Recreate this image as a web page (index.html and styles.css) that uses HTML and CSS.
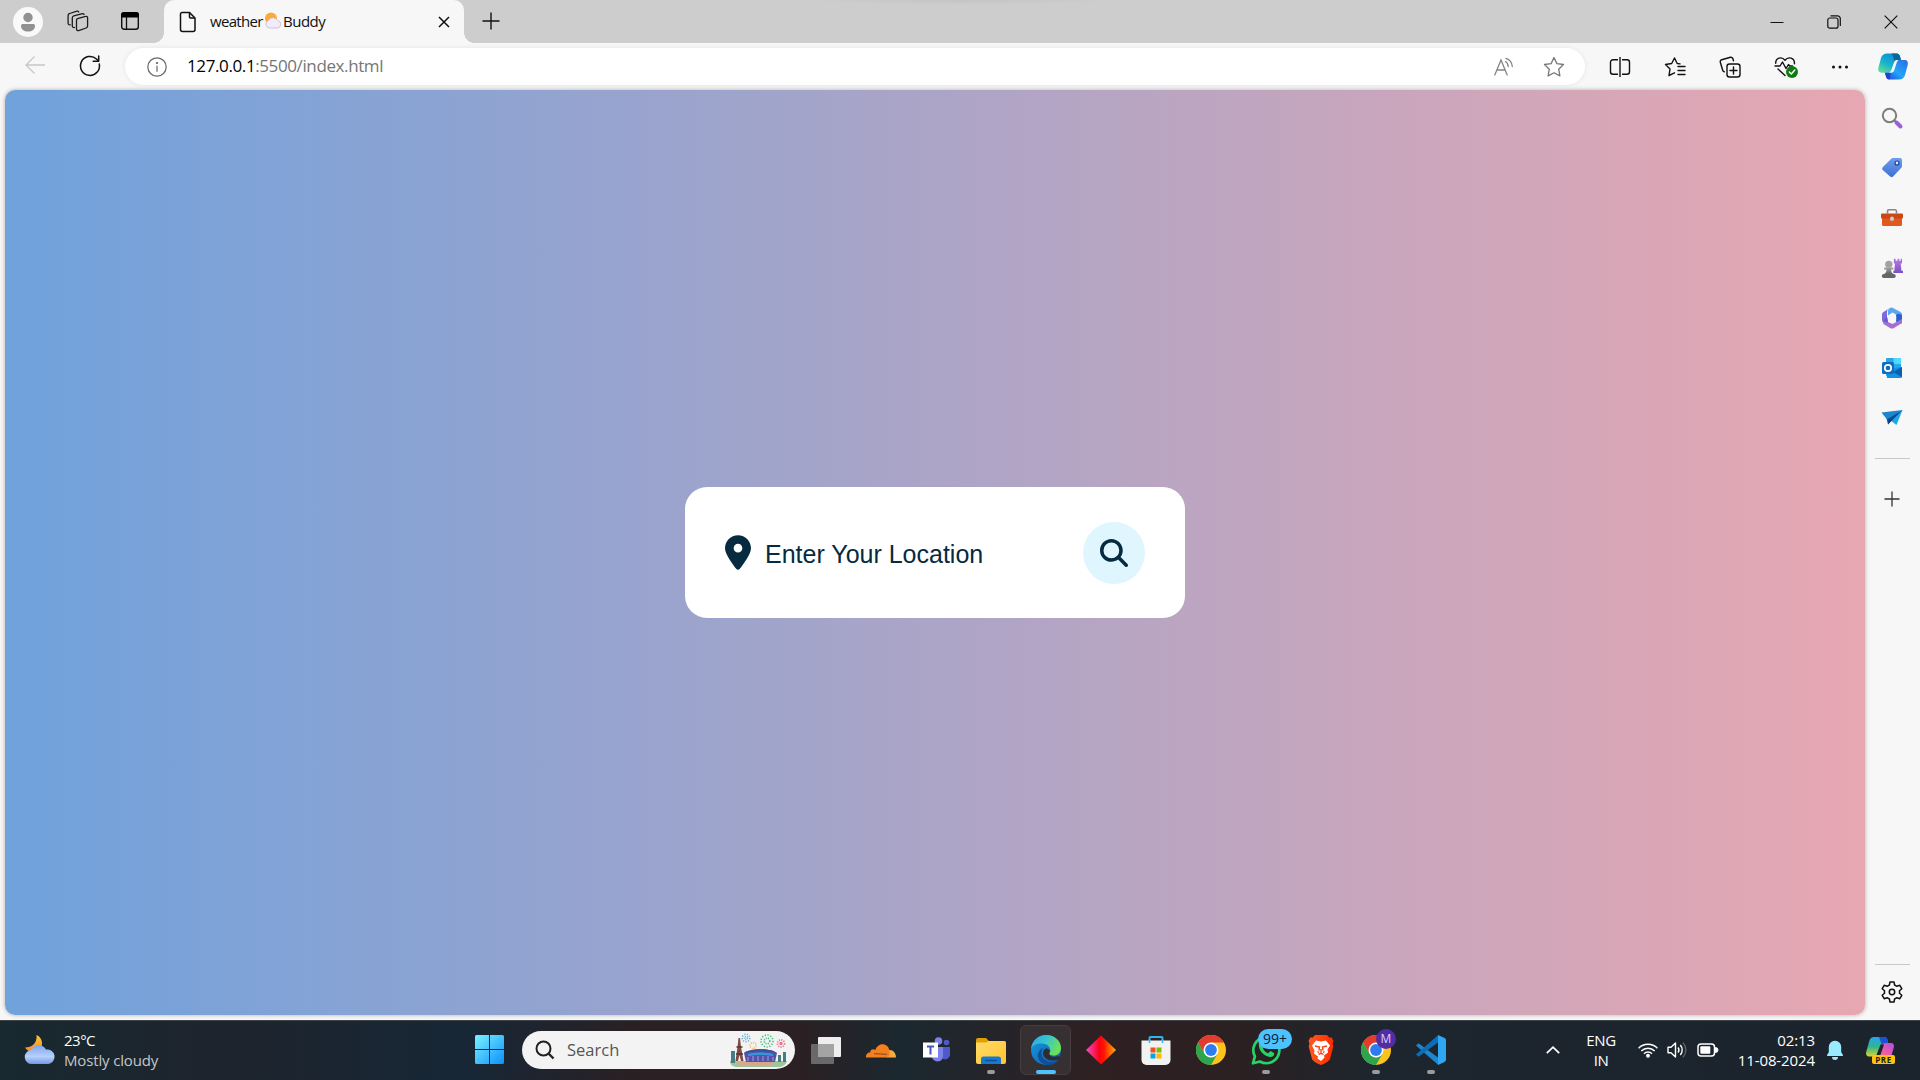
FILE: index.html
```html
<!DOCTYPE html>
<html lang="en">
<head>
<meta charset="utf-8">
<title>weather Buddy</title>
<link rel="stylesheet" href="styles.css">
</head>
<body>
<svg width="0" height="0" class="defs" aria-hidden="true">
  <defs>
    <linearGradient id="gCopA" x1="0" y1="1" x2=".6" y2="0"><stop offset="0" stop-color="#6be58c"/><stop offset=".5" stop-color="#1ab4cb"/><stop offset="1" stop-color="#0b8fd8"/></linearGradient>
    <linearGradient id="gCopB" x1="1" y1="0" x2="0" y2="1"><stop offset="0" stop-color="#2d6be0"/><stop offset=".55" stop-color="#22a6fa"/><stop offset="1" stop-color="#1b3fd0"/></linearGradient>
    <linearGradient id="gPurple" x1="0" y1="0" x2="0" y2="1"><stop offset="0" stop-color="#b779e6"/><stop offset="1" stop-color="#7b4fc4"/></linearGradient>
    <linearGradient id="gGrey" x1="0" y1="0" x2="0" y2="1"><stop offset="0" stop-color="#a3a3a3"/><stop offset="1" stop-color="#636363"/></linearGradient>
    <linearGradient id="gTag" x1="0" y1="0" x2="0" y2="1"><stop offset="0" stop-color="#6f9df0"/><stop offset="1" stop-color="#3d70d2"/></linearGradient>
    <linearGradient id="gWin" x1="0" y1="0" x2="1" y2="1"><stop offset="0" stop-color="#7cf1ff"/><stop offset="1" stop-color="#0b91fb"/></linearGradient>
    <linearGradient id="gCloud" x1="0" y1="0" x2="0" y2="1"><stop offset="0" stop-color="#7ea5ee"/><stop offset=".6" stop-color="#b7d0fb"/><stop offset="1" stop-color="#7398e6"/></linearGradient>
    <linearGradient id="gMoon" x1="0" y1="0" x2="0" y2="1"><stop offset="0" stop-color="#f9c640"/><stop offset="1" stop-color="#f08a24"/></linearGradient>
    <linearGradient id="gFolder" x1="0" y1="0" x2="1" y2="1"><stop offset="0" stop-color="#ffdb69"/><stop offset="1" stop-color="#ffc52e"/></linearGradient>
    <linearGradient id="gDiamond" x1="0" y1="0" x2="1" y2="0"><stop offset="0" stop-color="#f04bd0"/><stop offset=".45" stop-color="#ff0010"/><stop offset=".6" stop-color="#ff1500"/><stop offset="1" stop-color="#ffb800"/></linearGradient>
    <linearGradient id="gEdgeTop" x1="0" y1="0" x2="1" y2=".4"><stop offset="0" stop-color="#2aa6e4"/><stop offset=".5" stop-color="#35c3d4"/><stop offset="1" stop-color="#6be05a"/></linearGradient>
    <linearGradient id="gEdgeLow" x1="0" y1="0" x2="1" y2="1"><stop offset="0" stop-color="#1a9be3"/><stop offset="1" stop-color="#0c59a4"/></linearGradient>
    <linearGradient id="gBrave" x1="0" y1="0" x2="1" y2="0"><stop offset="0" stop-color="#ff5a1f"/><stop offset="1" stop-color="#ff2a00"/></linearGradient>
    <linearGradient id="gPreA" x1="0" y1="0" x2="0" y2="1"><stop offset="0" stop-color="#22a5f2"/><stop offset=".5" stop-color="#31b48d"/><stop offset="1" stop-color="#d9d52c"/></linearGradient>
    <linearGradient id="gPreB" x1="1" y1="0" x2="0" y2="1"><stop offset="0" stop-color="#a952e8"/><stop offset=".6" stop-color="#ec5ba8"/><stop offset="1" stop-color="#ff7f57"/></linearGradient>
    <symbol id="chrome" viewBox="0 0 30 30">
      <circle cx="15" cy="15" r="15" fill="#fcc31e"/>
      <path d="M2 7.500A15 15 0 0 1 28 7.500H15L8.500 18.750Z" fill="#e33b2e"/>
      <path d="M2 7.500A15 15 0 0 0 15 30L21.500 18.750 15 22.500 8.500 18.750Z" fill="#2da44e"/>
      <circle cx="15" cy="15" r="7.500" fill="#fff"/><circle cx="15" cy="15" r="5.900" fill="#2f7cf0"/>
    </symbol>
  </defs>
</svg>

<header class="tabstrip">
  <div class="profile"><svg width="30" height="30" viewBox="0 0 30 30"><circle cx="15" cy="15" r="15" fill="#f9f9f9"/><circle cx="15" cy="10.500" r="4.700" fill="#919191"/><path d="M8 18.500a1.500 1.500 0 0 1 1.500-1.500h11a1.500 1.500 0 0 1 1.500 1.500c0 4-3 6-7 6s-7-2-7-6Z" fill="#919191"/></svg></div>
  <svg class="strip-icon spaces" width="22" height="22" viewBox="0 0 22 22" fill="none" stroke="#1c1c1c" stroke-width="1.300" stroke-linejoin="round" stroke-linecap="round"><path d="M9.500 10.200a1.500 1.500 0 0 1 1.100-1.500l8-2.300a1.500 1.500 0 0 1 2 1.400v8.300a2 2 0 0 1-1.400 1.900l-7.600 2.600a1.600 1.600 0 0 1-2.100-1.500Z"/><path d="M7.500 17.500a1.700 1.700 0 0 1-2.200-1.600V7.800a2 2 0 0 1 1.500-1.900L15.500 3.600a1.500 1.500 0 0 1 1.500 .8"/><path d="M3.300 14.800a1.700 1.700 0 0 1-2.200-1.600V5.400a2 2 0 0 1 1.500-1.900L10 1.200a1.500 1.500 0 0 1 1.700 .8"/></svg>
  <svg class="strip-icon" width="20" height="20" viewBox="0 0 20 20"><rect x="1.700" y="1.700" width="16.600" height="16.600" rx="2.500" fill="none" stroke="#111" stroke-width="1.400"/><path d="M1 6.500V4a3 3 0 0 1 3-3h12a3 3 0 0 1 3 3v2.500Z" fill="#000"/><path d="M6.500 6v12" stroke="#111" stroke-width="1.300"/></svg>
  <div class="tab">
    <svg width="18" height="22" viewBox="0 0 18 22" fill="none" stroke="#111" stroke-width="1.500" stroke-linejoin="round"><path d="M3 1.500h7.500L16 7v11.500a2 2 0 0 1-2 2H3.500a2 2 0 0 1-2-2V3A1.500 1.500 0 0 1 3 1.500Z"/><path d="M10.500 1.500V6A1 1 0 0 0 11.500 7H16"/></svg>
    <div class="tab-title"><span class="t-weather">weather</span><svg width="18" height="17" viewBox="0 0 18 17"><circle cx="7" cy="6.500" r="6" fill="#fbaa35"/><path d="M5.500 16a4 4 0 0 1-.8-7.800A5 5 0 0 1 13.500 8.500a3.800 3.800 0 0 1 0 7.500Z" fill="#f1ecf7" stroke="#c3b6d6" stroke-width=".8"/></svg><span class="t-buddy">Buddy</span></div>
    <svg class="tab-close" width="12" height="12" viewBox="0 0 12 12" stroke="#111" stroke-width="1.500"><path d="M1 1l10 10M11 1L1 11"/></svg>
  </div>
  <svg class="newtab" width="18" height="18" viewBox="0 0 18 18" stroke="#111" stroke-width="1.400"><path d="M9 .5v17M.5 9h17"/></svg>
  <div class="drag-hint"></div>
  <div class="win-buttons">
    <svg width="14" height="14" viewBox="0 0 14 14"><path d="M.5 7.500h13" stroke="#111"/></svg>
    <svg width="14" height="14" viewBox="0 0 14 14" fill="none" stroke="#111" stroke-width="1.200"><rect x=".8" y="3" width="10.200" height="10.200" rx="2"/><path d="M3.500.8h7a2.800 2.800 0 0 1 2.800 2.800V11"/></svg>
    <svg width="14" height="14" viewBox="0 0 14 14" stroke="#111" stroke-width="1.200"><path d="M.7.7l12.600 12.600M13.300.7L.7 13.300"/></svg>
  </div>
</header>

<nav class="toolbar">
  <svg class="back" width="20" height="20" viewBox="0 0 20 20" fill="none" stroke="#c8c8c8" stroke-width="1.300"><path d="M20 10H1.200M9.500 1.500L1 10l8.500 8.500"/></svg>
  <svg class="reload" width="22" height="22" viewBox="0 0 22 22" fill="none" stroke="#111" stroke-width="1.500" stroke-linecap="round" stroke-linejoin="round"><path d="M20.300 9A9.500 9.500 0 1 1 17.500 4l1.700 1.700"/><path d="M19.700 1v5.200h-5.500"/></svg>
  <div class="address">
    <svg width="20" height="20" viewBox="0 0 20 20" fill="none" stroke="#666" stroke-width="1.200"><circle cx="10" cy="10" r="9.200"/><path d="M10 8.700v6"/><circle cx="10" cy="6" r=".5" fill="#666"/></svg>
    <div class="url"><span class="host">127.0.0.1</span><span class="path">:5500/index.html</span></div>
    <svg class="read" width="20" height="20" viewBox="0 0 20 20" fill="none" stroke="#858585" stroke-width="1.300" stroke-linecap="round"><path d="M.8 18L7 3l6.200 15M3 13h8M11.500 4.500c1.800 1 2.600 2.500 2.700 5M12 1.300c3.800 1.300 6 4 6.300 8.200"/></svg>
    <svg width="22" height="22" viewBox="0 0 22 22" fill="none" stroke="#777" stroke-width="1.300" stroke-linejoin="round"><path d="M11 1.500l2.900 6.100 6.600.9-4.800 4.700 1.200 6.700L11 16.700l-5.900 3.200 1.200-6.700L1.500 8.500l6.600-.9Z"/></svg>
  </div>
  <div class="actions">
    <svg width="22" height="22" viewBox="0 0 22 22" fill="none" stroke="#111" stroke-width="1.400"><path d="M9 3.700H4A2.500 2.500 0 0 0 1.500 6.200v9.600A2.500 2.500 0 0 0 4 18.300h5M13 3.700h5a2.500 2.500 0 0 1 2.500 2.500v9.600a2.500 2.500 0 0 1-2.500 2.500h-5M11 1v20"/></svg>
    <svg width="22" height="22" viewBox="0 0 22 22" fill="none" stroke="#111" stroke-width="1.400" stroke-linejoin="round" stroke-linecap="round"><path d="M16 7.900L13.200 7.500 10.500 2 7.700 7.500 1.500 8.500 6 13 5 19.500l5.500-2.700M14 10.500H21M14 14.500H21M14 18.500H21"/></svg>
    <svg width="22" height="22" viewBox="0 0 22 22" fill="none" stroke="#111" stroke-width="1.400" stroke-linecap="round"><rect x="8" y="8" width="13" height="13" rx="2.500"/><path d="M14.500 11v7M11 14.500h7M5.200 15.800a2 2 0 0 1-1.500-1.600L1.300 6.200A2 2 0 0 1 2.700 3.700l8.800-2.400a2 2 0 0 1 2.400 1.500l.6 2"/></svg>
    <svg width="24" height="24" viewBox="0 0 24 24" fill="none" stroke="#111" stroke-width="1.400" stroke-linejoin="round" stroke-linecap="round"><path d="M1.700 8.300C1.500 2.600 7.800 1.200 11 5.200c3.300-4 9.700-2.600 9.500 3.500M4 14l7 6.500M1 11h5l2.500-4 3.500 6.500 2.500-4 1 1.500h3"/><circle cx="18" cy="17" r="6" fill="#107c10" stroke="none"/><path d="M15.300 17l2 2 3.500-4" stroke="#fff"/></svg>
    <svg width="18" height="18" viewBox="0 0 18 18" fill="#111"><circle cx="2.500" cy="9" r="1.500"/><circle cx="9" cy="9" r="1.500"/><circle cx="15.500" cy="9" r="1.500"/></svg>
  </div>
  <svg class="copilot" width="30" height="27" viewBox="0 0 30 27"><path d="M9 .5h9.500c2 0 3 1.200 3.500 3l1 3.500h-3.500c-1.800 0-2.800 1-3.400 3l-2.200 6.500c-.8 2.200-2 3.200-4.200 3.200H3.500C.8 19.700-.3 17.500.5 14.500L3 5C3.800 2 6 .5 9 .5Z" fill="url(#gCopA)"/><path d="M13.500.5h5c2 0 3 1.200 3.500 3l1 3.500h-3.500c-1.800 0-2.800 1-3.400 3-.1-4-.6-7-2.600-9.500Z" fill="#0a6796"/><path d="M20.500 26.500h-9c-2 0-3-1.200-3.500-3l-1-3.800h2.700c2.200 0 3.400-1 4.200-3.200L16.100 10c.6-2 1.600-3 3.400-3h7c2.700 0 3.900 2 3.200 5L27 22c-.8 3-3 4.500-6.500 4.500Z" fill="url(#gCopB)"/><path d="M11.500 26.500c-2 0-3-1.200-3.500-3l-1-3.800h2.700c1.800 0 2.900-.7 3.700-2.200Z" fill="#1c46d2"/><path d="M16.400 8.500c.6-1 1.500-1.500 3-1.500h1.200c-1 .6-1.500 1.500-2 3l-2.200 6.800c-.6 1.900-1.400 2.900-3.200 2.900h-3c1.700-.3 2.600-1.300 3.300-3.200Z" fill="#f7f7f7"/></svg>
</nav>

<div class="content">
  <main class="page">
    <div class="card">
      <svg class="pin" width="26" height="35" viewBox="0 0 384 512"><path fill="#062a3f" d="M215.700 499.200C267 435 384 279.400 384 192C384 86 298 0 192 0S0 86 0 192c0 87.400 117 243 168.300 307.200c12.300 15.300 35.100 15.300 47.400 0zM192 128a64 64 0 1 1 0 128 64 64 0 1 1 0-128z"/></svg>
      <div class="placeholder">Enter Your Location</div>
      <div class="search-btn"><svg width="28" height="28" viewBox="0 0 512 512"><path fill="#062a3f" d="M416 208c0 45.900-14.900 88.300-40 122.700L502.600 457.400c12.500 12.500 12.500 32.800 0 45.300s-32.800 12.500-45.300 0L330.700 376c-34.400 25.200-76.800 40-122.700 40C93.100 416 0 322.900 0 208S93.100 0 208 0S416 93.100 416 208zM208 352a144 144 0 1 0 0-288 144 144 0 1 0 0 288z"/></svg></div>
    </div>
  </main>
  <aside class="sidebar">
    <svg width="22" height="22" viewBox="0 0 22 22"><path d="M13.500 13.500l2.500 2.500" stroke="#777" stroke-width="2"/><circle cx="8.500" cy="8.500" r="6.700" fill="#f7f7f7" stroke="#7d7d7d" stroke-width="2"/><path d="M15.500 15.500l4 4" stroke="#9863d6" stroke-width="4" stroke-linecap="round"/></svg>
    <svg width="22" height="22" viewBox="0 0 22 22"><path d="M12 1h7a2 2 0 0 1 2 2v6a3 3 0 0 1-.9 2.100l-8 8.500a2 2 0 0 1-2.900 0L1.700 13a2 2 0 0 1 0-2.800L10 1.900A3 3 0 0 1 12 1Z" fill="url(#gTag)"/><circle cx="16" cy="6" r="2" fill="#dfe9ff" stroke="#1d3f86" stroke-width="1.200"/></svg>
    <svg width="22" height="22" viewBox="0 0 22 22"><path d="M6.500 6.500V4.300a1.500 1.500 0 0 1 1.500-1.500h6a1.500 1.500 0 0 1 1.500 1.500v2.200" fill="none" stroke="#888" stroke-width="1.600"/><path d="M1 10h20v7.500a1.500 1.500 0 0 1-1.500 1.500h-17A1.500 1.500 0 0 1 1 17.500Z" fill="#e0591f"/><rect x="0" y="6.500" width="22" height="5" rx="1" fill="#cb4713"/><rect x="9" y="9.500" width="4" height="4.500" rx="2" fill="#c9c9c9"/></svg>
    <svg width="24" height="24" viewBox="0 0 24 24"><path d="M14 2h2v2h2V2h2v2h1.500V2H23v5h-1.500l.8 8H24v2.500H13.500V15h1l.8-8H14Z" fill="url(#gPurple)"/><circle cx="8.500" cy="8" r="4" fill="#a2a2a2"/><path d="M3.500 11.500h10v2h-2.500c0 3 1 4 3 5.200h-11c2-1.200 3-2.200 3-5.200H3.500Z" fill="url(#gGrey)"/><rect x="1" y="18.500" width="15" height="4.500" rx="2" fill="#666"/></svg>
    <svg width="22" height="22" viewBox="0 0 22 22"><path d="M8.500 1.200C6.500 2.400 6 3.500 6 5.500v7L2.500 15.300A3 3 0 0 1 1 12.700V7.500A3 3 0 0 1 2.500 5Z" fill="#7c6bdc"/><path d="M8.500 1.200a3.500 3.500 0 0 1 4 0L19.500 5A3 3 0 0 1 21 7.500V11l-6-3.500-3.500-2L7 8.500V5c0-2 .3-2.800 1.500-3.800Z" fill="#58a9f0"/><path d="M21 8v6.500c0 1.300-.5 2-1.500 2.600L15 14.500V8l2-1.500Z" fill="#2f5fd0"/><path d="M2.500 17L1.500 14l5.500-3v4l4.500 2L21 12v2.500a3 3 0 0 1-1.500 2.600L13 21a4 4 0 0 1-4 0Z" fill="#a66fd2"/><path d="M6 9.500L2 14.500 7 15.500Z" fill="#5960cc"/><path d="M11 6.500l4.200 2.400v4.400L11 15.700l-4.200-2.400V8.900Z" fill="#f7f7f7"/></svg>
    <svg width="22" height="22" viewBox="0 0 22 22"><rect x="5" y="1" width="15" height="18" rx="1" fill="#28a8ea"/><path d="M12.500 1H20v6h-7.500Z" fill="#50d9ff"/><path d="M5 7h7.500v6H5Z" fill="#0364b8"/><path d="M21 10v9.500a1.500 1.500 0 0 1-1.500 1.500H6L5 12Z" fill="#1490df"/><path d="M21 10v10L12 15Z" fill="#0a5fae"/><rect x="1" y="5" width="12" height="12" rx="1.500" fill="#0f6cc4"/><circle cx="7" cy="11" r="3.200" fill="none" stroke="#fff" stroke-width="1.700"/></svg>
    <svg width="22" height="22" viewBox="0 0 22 22"><path d="M21.500 3L15.500 18 9 13Z" fill="#1fa5e8"/><path d="M21.500 3L7 17.500 5.500 11Z" fill="#0a4a90"/><path d="M21.500 3L.5 5.500 6 12.500Z" fill="#1c86cf"/><path d="M7 17.500l3-4-1-1Z" fill="#0b2f66"/></svg>
    <hr class="rule">
    <svg class="add" width="16" height="16" viewBox="0 0 16 16" stroke="#333" stroke-width="1.300"><path d="M8 .5v15M.5 8h15"/></svg>
    <div class="grow"></div>
    <hr class="rule lower">
    <svg class="gear" width="22" height="22" viewBox="0 0 22 22" fill="none" stroke="#111" stroke-width="1.500" stroke-linejoin="round"><path d="M9 1h4l.6 3 2.300 1.300 2.900-1 2 3.400L18.500 9.700v2.600l2.300 2-2 3.400-2.900-1L13.600 18 13 21H9l-.6-3-2.300-1.300-2.900 1-2-3.400 2.300-2V9.700L1.200 7.700l2-3.400 2.900 1L8.400 4Z"/><circle cx="11" cy="11" r="2.700"/></svg>
  </aside>
</div>

<footer class="taskbar">
  <div class="weather">
    <svg width="32" height="32" viewBox="0 0 32 32"><path d="M12.500 1C18 3.500 20 10 16 15.500 12.500 20 4 19 1 13.500 8 13.500 13.500 9 12.500 1Z" fill="url(#gMoon)"/><path d="M8 30a7 7 0 0 1-.5-14C9.500 10 19 9.500 22 15.500a7.300 7.300 0 0 1 2.500 14.500Z" fill="url(#gCloud)"/></svg>
    <div class="weather-text"><span class="temp">23°C</span><span class="cond">Mostly cloudy</span></div>
  </div>
  <svg class="start" width="29" height="29" viewBox="0 0 29 29" fill="url(#gWin)"><path d="M1.500 0H14v14H0V1.500A1.500 1.500 0 0 1 1.500 0ZM15 0h12.500A1.500 1.500 0 0 1 29 1.500V14H15ZM0 15h14v14H1.500A1.500 1.500 0 0 1 0 27.500ZM15 15h14v12.500a1.500 1.500 0 0 1-1.500 1.500H15Z"/></svg>
  <div class="searchbox">
    <svg width="20" height="20" viewBox="0 0 20 20" fill="none" stroke="#222" stroke-width="2"><circle cx="8.500" cy="8.500" r="7"/><path d="M13.500 13.500l5 5" stroke-width="2.400"/></svg>
    <span class="search-label">Search</span>
    <svg class="highlight" width="58" height="34" viewBox="0 0 58 34">
      <path d="M0 28h57c-1 4-5 6-9 6H8c-5 0-8-2-8-6Z" fill="#9fc59a"/><path d="M6 29h38l-4 4H10Z" fill="#d7a98a"/>
      <path d="M1 18h4v12H1ZM48 22h3v7h-3ZM53 19h3v10h-3Z" fill="#467d85"/>
      <path d="M8.500 5h1.500l1 9 2.500 14H11L9.500 22 8 28H5.500L7.500 14Z" fill="#7d4a45"/><path d="M6.500 14h6M6 21h7" stroke="#5a322f" stroke-width="1.300"/>
      <path d="M14 20c6-5 27-5 33 0l-2 9H16Z" fill="#5a50a8"/><path d="M14 20c6-5 27-5 33 0-8-2-25-2-33 0Z" fill="#3a4f9e"/><path d="M18 21c7-2 18-2 25 0v2c-7-1.500-18-1.500-25 0Z" fill="#2f9ad8"/><path d="M18 24v4M23 23v5M28 23v5M33 23v5M38 23v5M43 24v4" stroke="#8aa8e8"/>
      <g fill="none" stroke-width="1.600"><circle cx="16" cy="5" r="3.800" stroke="#6fb0d4" stroke-dasharray="1.200 1.400"/><circle cx="16" cy="5" r="1.500" stroke="#6fb0d4" stroke-dasharray="1 .8"/><circle cx="23" cy="12.500" r="3" stroke="#efc36a" stroke-dasharray="1.300 1"/><circle cx="37" cy="8" r="6" stroke="#4dbf80" stroke-dasharray="1.300 1.500"/><circle cx="37" cy="8" r="2.800" stroke="#4dbf80" stroke-dasharray="1.200 1.100"/><circle cx="51" cy="10.500" r="3.600" stroke="#e8708e" stroke-dasharray="1.200 1.200"/><circle cx="51" cy="10.500" r="1" stroke="#e8708e"/></g>
    </svg>
  </div>
  <div class="apps">
    <div class="app"><svg width="30" height="30" viewBox="0 0 30 30"><rect x="7" y="2" width="23" height="20" rx="1" fill="#eeeeee"/><rect x="0" y="9" width="23" height="20" rx="1" fill="#717171" fill-opacity=".9"/><path d="M7 9h16v13H7Z" fill="#a4a4a4"/></svg></div>
    <div class="app"><svg width="30" height="30" viewBox="0 0 30 30"><path d="M21 22.500c1-3.500 1-5.500 2-7.500 4-.5 7 3 7 7.500Z" fill="#f9ab41"/><path d="M0 22.500c-.3-3 1.500-5 4.200-5 0-3 3-4 5-2.500C12 7 22 7.500 23.500 15.500c.6 3-.5 7-1.500 7Z" fill="#f38020"/><path d="M8 18.700l13 .6" stroke="#7d3d13" stroke-width=".9"/></svg></div>
    <div class="app"><svg width="30" height="30" viewBox="0 0 30 30"><circle cx="25.500" cy="7.500" r="2.800" fill="#5059c9"/><path d="M20 12h9v8a5 5 0 0 1-7 4Z" fill="#5059c9"/><circle cx="17.500" cy="6" r="3.800" fill="#7b83eb"/><path d="M11 12h11v9c0 7-9 7-11 1.500Z" fill="#7b83eb"/><rect x="2" y="7.500" width="15" height="15" fill="#fff"/><path d="M6 11.500h7M9.500 11.500v8" stroke="#4b53bc" stroke-width="2"/></svg></div>
    <div class="app"><svg width="30" height="30" viewBox="0 0 30 30"><path d="M0 5a2 2 0 0 1 2-2h8l3 3v5H0Z" fill="#e0a100"/><path d="M0 7.500h10l3-1.500h15.500A1.500 1.500 0 0 1 30 7.500V27a2 2 0 0 1-2 2H2a2 2 0 0 1-2-2Z" fill="url(#gFolder)"/><path d="M5 29v-5a2.500 2.500 0 0 1 2.500-2.500h15A2.500 2.500 0 0 1 25 24v5Z" fill="#1579cf"/><path d="M9 25.500h12" stroke="#0a4f94" stroke-width="1.300"/></svg><i class="run"></i></div>
    <div class="app active"><svg width="30" height="30" viewBox="0 0 30 30"><circle cx="15" cy="15" r="15" fill="url(#gEdgeLow)"/><path d="M0 14C1 5 8 0 15 0c9 0 15 6 15 13 0 5-4 8-8 7.500-4-.5-4.500-2-3-4C20 14 18 9 11.500 8.500 5.500 8 1 11 0 14Z" fill="url(#gEdgeTop)"/><path d="M12 13c-4 6 0 14 9 14 4 0 6-1.500 7.500-4C25 33 9 32 7 22c-.7-4 2-8 5-9Z" fill="#0e4f9c"/><path d="M19 16.500c-2.500 4 2 6 6.500 5 3-.7 4 .5 3 2-7 4.500-17 1-16.500-6 .2-3 3-5 5-3.500 1.500 1 2.500 1.500 2 2.500Z" fill="#302c30"/></svg><i class="run wide"></i></div>
    <div class="app"><svg width="30" height="30" viewBox="0 0 30 30"><path d="M15 0.500L30 15 15 29.500 0 15Z" fill="url(#gDiamond)"/></svg></div>
    <div class="app"><svg width="30" height="30" viewBox="0 0 30 30"><path d="M8.500 7V3a1 1 0 0 1 1-1h11a1 1 0 0 1 1 1v4" fill="none" stroke="#31b3ec" stroke-width="2"/><path d="M.5 5.500h29V25a5 5 0 0 1-5 5h-19a5 5 0 0 1-5-5Z" fill="#f2f2f2"/><path d="M8.500 5v3M21.500 5v3" stroke="#31b3ec" stroke-width="1.500"/><path d="M9.500 12.500h5v5h-5Z" fill="#f25022"/><path d="M15.500 12.500h5v5h-5Z" fill="#7fba00"/><path d="M9.500 18.500h5v5h-5Z" fill="#00a4ef"/><path d="M15.500 18.500h5v5h-5Z" fill="#ffb900"/></svg></div>
    <div class="app"><svg width="30" height="30"><use href="#chrome"/></svg></div>
    <div class="app"><svg width="30" height="30" viewBox="0 0 30 30" fill="none" stroke="#25d366" stroke-width="2.700"><path d="M2 28.300l1.900-7A13 13 0 1 1 9 26.500Z" stroke-linejoin="round"/><path d="M8 8c-1.500 7 5 14 12 14 2.500-.5 3.500-2 3-4l-3.500-2-2.300 2.200c-2.500-.8-4.500-2.700-5.400-5.200l1.700-2L12 7.500h-2Z" fill="#25d366" stroke="none"/></svg><b class="badge count">99+</b><i class="run"></i></div>
    <div class="app"><svg width="30" height="30" viewBox="0 0 30 30"><path d="M9 0h12l2.500 2.800 2-.5L27.500 6l-1 2.500.8 3L24 24c-1 2.500-6 5-9 6-3-1-8-3.500-9-6L2.700 11.500l.8-3L2.500 6l2-3.700 2 .5Z" fill="url(#gBrave)"/><path d="M10 5.500l5 1 5-1 4 5-2.500 4 .5 3-4 3 .5 2L15 26l-3.500-2.500.5-2-4-3 .5-3L6 10.500Z" fill="#fff"/><path d="M9 11l4.500 1-.5 3.500M21 11l-4.500 1 .5 3.500M15 14v4M12.500 19.300l2.500-1 2.500 1M11.500 16.500l1.500 1M18.500 16.500l-1.500 1" fill="none" stroke="#ff4014" stroke-width="1.400"/></svg></div>
    <div class="app"><svg width="30" height="30"><use href="#chrome"/></svg><b class="badge letter">M</b><i class="run"></i></div>
    <div class="app"><svg width="30" height="30" viewBox="0 0 30 30"><path d="M0 10.500l2.500-2.200L22 22.500v7.200Z" fill="#1c87cf"/><path d="M0 19.500l2.500 2.200L22 7.500V.3Z" fill="#0f6db5"/><path d="M22 0l6.500 3a2.500 2.500 0 0 1 1.500 2.200v19.600a2.500 2.500 0 0 1-1.500 2.200L22 30Z" fill="#2fa8f3"/></svg><i class="run"></i></div>
  </div>
  <div class="tray">
    <svg class="chev" width="14" height="8" viewBox="0 0 14 8" fill="none" stroke="#fff" stroke-width="1.800"><path d="M.8 7.200L7 1.200l6.200 6"/></svg>
    <div class="lang"><span>ENG</span><span>IN</span></div>
    <svg class="wifi" width="20" height="16" viewBox="0 0 20 16" fill="none" stroke="#fff" stroke-width="1.500"><path d="M.6 6.200a13.300 13.300 0 0 1 18.800 0M3.300 9a9.500 9.500 0 0 1 13.400 0M6 11.700a5.700 5.700 0 0 1 8 0"/><circle cx="10" cy="13.800" r="1.200" fill="#fff"/></svg>
    <svg class="vol" width="20" height="18" viewBox="0 0 20 18" fill="none" stroke="#fff" stroke-width="1.400" stroke-linejoin="round"><path d="M1 6.200h3L8.500 2v14L4 11.800H1Z"/><path d="M11 6.500a4 4 0 0 1 0 5M13.300 4a7.500 7.500 0 0 1 0 10"/><path d="M16 1.800a10.500 10.500 0 0 1 0 14.400" stroke="#5b6167"/></svg>
    <svg class="bat" width="21" height="14" viewBox="0 0 21 14"><rect x="1" y="1" width="16.500" height="12" rx="3" fill="none" stroke="#fff" stroke-width="1.500"/><rect x="3.300" y="3.300" width="10" height="7.400" rx="1" fill="#fff"/><path d="M18.500 4.500a2.500 2.500 0 0 1 0 5Z" fill="#fff" stroke="#fff"/></svg>
    <div class="clock"><span>02:13</span><span>11-08-2024</span></div>
    <svg class="bell" width="18" height="20" viewBox="0 0 18 20" fill="#99ebff"><path d="M9 .8a6 6 0 0 1 6.200 6v5.400l1.700 2.500a.8.800 0 0 1-.6 1.200H1.700a.8.800 0 0 1-.6-1.200l1.700-2.500V6.800A6 6 0 0 1 9 .8ZM6 17h6a3 3 0 0 1-6 0Z"/></svg>
    <div class="pre"><svg width="30" height="28" viewBox="0 0 30 28"><path d="M9 1h10c2 0 3 1 3.500 3L23 7h-2.500c-2 0-3 1-3.500 2.500L14 18c-.7 2-2 2.500-4 2.500H4C1.500 20.500.5 18 1.300 15.500L4.300 5C5 2.500 6.500 1 9 1Z" fill="url(#gPreA)"/><path d="M14 1h5c2 0 3 1 3.500 3L23 7h-2.500c-2 0-3 1-3.500 2.500Z" fill="#1f4fd6"/><path d="M20.500 7H26c2.500 0 3.500 2 2.800 4.500L26 21H13l4-11.500C17.500 8 18.500 7 20.500 7Z" fill="url(#gPreB)"/><path d="M15.500 8.500h3.500L15.500 19H11.500Z" fill="#1b242c"/></svg><b class="pre-tag">PRE</b></div>
  </div>
</footer>
</body>
</html>
```
FILE: styles.css
```css
* { box-sizing: border-box; }
html, body { margin: 0; width: 1920px; height: 1080px; overflow: hidden; }
body {
  display: grid;
  grid-template-rows: 43px 47px 930px 60px;
  background: #f7f7f7;
  font-family: "Open Sans", "Noto Sans", sans-serif;
  color: #111;
}
svg { display: block; flex: none; overflow: visible; }
.defs { position: absolute; }

/* tab strip */
.tabstrip { display: flex; align-items: center; background: #cdcdcd; }
.profile { margin-left: 13px; }
.spaces { margin-left: 24px; }
.strip-icon { margin-bottom: 1px; }
.strip-icon + .strip-icon { margin-left: 31px; }
.tab {
  position: relative;
  display: flex;
  align-items: center;
  width: 300px;
  height: 43px;
  margin-left: 24px;
  padding: 0 14px 0 15px;
  background: #f7f7f7;
  border-radius: 10px 10px 0 0;
}
.tab::before, .tab::after {
  content: "";
  position: absolute;
  bottom: 0;
  width: 10px;
  height: 10px;
}
.tab::before { left: -10px; background: radial-gradient(circle at 0 0, transparent 9.5px, #f7f7f7 10px); }
.tab::after { right: -10px; background: radial-gradient(circle at 100% 0, transparent 9.5px, #f7f7f7 10px); }
.tab-title { display: flex; align-items: center; margin: 0 0 2px 13px; font-size: 15px; line-height: 20px; white-space: nowrap; }
.t-weather { width: 54px; letter-spacing: -0.7px; }
.t-buddy { margin-left: 1px; letter-spacing: -0.5px; }
.tab-close { margin-left: auto; }
.newtab { margin: 0 0 2px 18px; }
.drag-hint { align-self: flex-start; width: 310px; height: 5px; margin-left: 307px; background: radial-gradient(50% 100% at 50% 0, #c4c4c4, #cdcdcd); }
.win-buttons { display: flex; gap: 43px; margin-left: auto; margin-right: 22px; }

/* toolbar */
.toolbar { display: flex; align-items: flex-start; background: #f7f7f7; }
.toolbar > svg { margin-top: 12px; }
.back { margin-left: 25px; }
.reload { margin-left: 34px; }
.address {
  display: flex;
  align-items: center;
  width: 1460px;
  height: 37px;
  margin: 5px 0 0 24px;
  padding: 0 20px 0 22px;
  border-radius: 19px;
  background: #fff;
  box-shadow: 0 0 5px rgba(0, 0, 0, .08);
}
.url { margin: 0 0 1px 20px; font-size: 17px; letter-spacing: -0.39px; line-height: 22px; white-space: nowrap; }
.host { color: #000; }
.path { color: #767676; }
.read { margin-left: auto; margin-right: 29px; }
.actions { display: flex; align-items: center; gap: 33px; height: 47px; margin-left: 24px; }
.toolbar > .copilot { margin: 10px 12px 0 auto; }

/* content */
.content { display: grid; grid-template-columns: 1860px 50px; padding: 0 0 5px 5px; }
.page {
  display: flex;
  justify-content: center;
  align-items: flex-start;
  height: 925px;
  padding-top: 397px;
  border-radius: 10px;
  background: linear-gradient(to right, #70a2dc, #e7a7b2);
  box-shadow: 0 0 4px rgba(0, 0, 0, .3);
}
.card {
  display: flex;
  align-items: center;
  width: 500px;
  height: 131px;
  padding: 0 40px;
  border-radius: 22px;
  background: #fff;
}
.placeholder { margin: 2px 0 0 14px; font: 25px/30px "Liberation Sans", Arial, sans-serif; color: #062a3f; }
.search-btn { display: flex; align-items: center; justify-content: center; width: 62px; height: 62px; margin-left: auto; border-radius: 50%; background: #dff6ff; }

/* sidebar */
.sidebar { display: flex; flex-direction: column; align-items: center; gap: 28px; width: 54px; height: 925px; padding-top: 17px; }
.sidebar > svg { height: 22px; }
.rule { width: 35px; height: 1px; margin: 1px 0 0; border: 0; background: #c9c9c9; }
.sidebar .add { height: 16px; margin-top: 4px; }
.grow { flex: 1; }
.sidebar .gear { margin: -12px 0 12px; }

/* taskbar */
.taskbar {
  display: flex;
  align-items: center;
  padding-bottom: 2px;
  border-top: 1px solid #3e4448;
  background: linear-gradient(to right, #182930 0, #1e242d 220px, #172736 470px, #2b2023 640px, #2b2023 800px, #1b2830 900px, #2f2022 1100px, #2b2022 1240px, #1d262e 1380px, #1b242c 1920px);
  color: #fff;
}
.weather { display: flex; align-items: center; width: 475px; padding-left: 24px; }
.weather-text { display: flex; flex-direction: column; margin-left: 8px; font-size: 15px; line-height: 20px; }
.temp { letter-spacing: -0.5px; }
.cond { color: #c3c7c9; letter-spacing: -0.15px; }
.searchbox {
  display: flex;
  align-items: center;
  width: 273px;
  height: 38px;
  margin-left: 18px;
  padding: 0 7px 0 13px;
  border-radius: 19px;
  background: #f3f3f3;
}
.search-label { margin-left: 12px; font-size: 16.5px; color: #555; }
.highlight { margin-left: auto; }
.apps { display: flex; margin-left: 3px; }
.app { position: relative; display: flex; align-items: center; justify-content: center; width: 55px; height: 50px; }
.active::before { content: ""; position: absolute; inset: 0 2px; border: 1px solid #453d40; border-radius: 6px; background: #373033; }
.active svg { position: relative; }
.run { position: absolute; bottom: 1px; left: 50%; width: 8px; height: 4px; margin-left: -4px; border-radius: 2px; background: #9b9b9b; }
.wide { width: 20px; margin-left: -10px; background: #4cc2ff; }
.badge { position: absolute; font-weight: 400; text-align: center; }
.count { left: 20px; top: 4px; width: 34px; height: 20px; border-radius: 10px; background: #4cc2ff; color: #10202c; font-size: 14px; line-height: 20px; }
.letter { left: 28px; top: 4px; width: 20px; height: 20px; border-radius: 50%; background: #512da8; color: #ddd4f2; font-size: 12px; line-height: 20px; }
.tray { display: flex; align-items: center; margin-left: 88px; font-size: 15px; line-height: 20px; letter-spacing: -0.4px; }
.lang, .clock { display: flex; flex-direction: column; }
.lang { align-items: center; width: 40px; margin-left: 21px; }
.clock { align-items: flex-end; width: 90px; margin-left: 7px; letter-spacing: -0.1px; }
.wifi { margin-left: 17px; }
.vol { margin-left: 9px; }
.bat { margin-left: 10px; }
.bell { margin-left: 11px; }
.pre { position: relative; margin-left: 21px; }
.pre-tag { position: absolute; left: 7px; top: 19px; width: 23px; height: 9px; border-radius: 2px; background: #ffc20e; color: #1a1a1a; font-size: 8px; line-height: 9px; letter-spacing: .6px; text-align: center; }
```
